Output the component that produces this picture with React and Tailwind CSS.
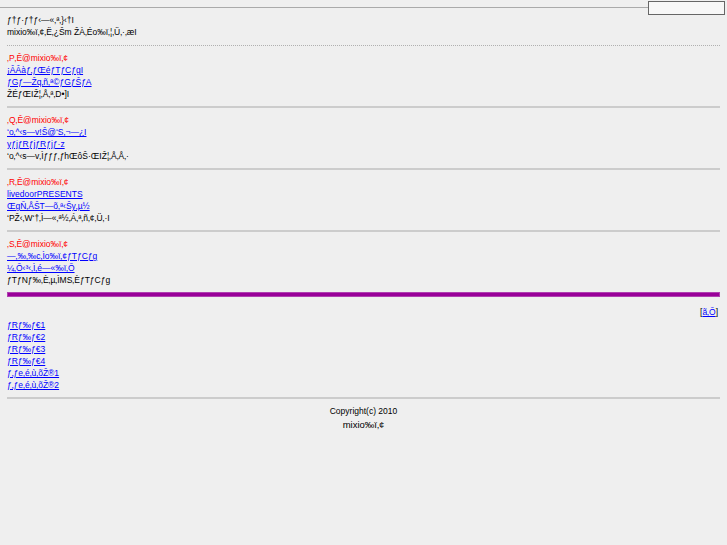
const SECTIONS = [
  {
    title: '‚P‚Ê@mixio‰ï‚¢',
    links: ['¡ÂÂàƒ‚ƒŒéƒTƒCƒgI', 'ƒGƒ—Žq‚ñ‚ª©ƒGƒŠƒA'],
    note: 'ŽÉƒŒIŽ¦‚Å‚ª‚D•]I',
  },
  {
    title: '‚Q‚Ê@mixio‰ï‚¢',
    links: ['‘o‚^‹s—v!Š@‘S‚¬—¿I', 'yƒjƒRƒjƒRƒjƒ·z'],
    note: '‘o‚^‹s—v‚Ìƒƒƒ‚ƒhŒôŠ·ŒIŽ¦‚Å‚Å‚·',
  },
  {
    title: '‚R‚Ê@mixio‰ï‚¢',
    links: ['livedoorPRESENTS', 'ŒgÑ‚ÅŠT—õ‚ª‹Šy‚µ½'],
    note: '‘PŽ‹‚W‘†‚Ì—«‚ª½‚Á‚ª‚ñ‚¢‚Ü‚·I',
  },
  {
    title: '‚S‚Ê@mixio‰ï‚¢',
    links: ['—‚‰‚‰c‚Ìo‰ï‚¢ƒTƒCƒg', '¼‚Õ‹³‹‚Ì‚é—«‰ï‚Õ'],
    note: 'ƒTƒNƒ‰‚È‚µ‚ÌMS‚ÈƒTƒCƒg',
  },
]

const MENU = ['ƒRƒ‰ƒ€1', 'ƒRƒ‰ƒ€2', 'ƒRƒ‰ƒ€3', 'ƒRƒ‰ƒ€4', 'ƒ‚ƒe‚é‚ù‚õŽ®1', 'ƒ‚ƒe‚é‚ù‚õŽ®2']

function Section({ s, last }) {
  return (
    <div className="mt-[6px]">
      <p className="text-[#ff0000]">{s.title}</p>
      {s.links.map((l) => (
        <p key={l}>
          <a href="#" className="text-[#0000ff] underline">{l}</a>
        </p>
      ))}
      <p>{s.note}</p>
      {!last && <div className="mt-[6px] h-[2px] bg-[#cccccc]" />}
    </div>
  )
}

export default function App() {
  return (
    <div className="min-h-[545px] bg-[#efefef] text-[#000] text-[8.5px] leading-[12px] font-['Liberation_Sans',Arial,sans-serif]">
      {/* header strip */}
      <div className="flex items-start">
        <div className="flex-1 mt-[7px] h-px bg-[#aaaaaa]" />
        <div className="mt-[1px] mr-[2px] w-[77px] h-[14px] border border-[#666666] bg-[#f7f7f7]" />
      </div>

      <div className="px-[7px]">
        <div className="-mt-px">
          <p>ƒ†ƒ·ƒ†ƒ‹—«‚ª‚}‹†I</p>
          <p>mixio‰ï‚¢‚Ë‚¿Šm ŽÀ‚Éo‰ï‚¦‚Ü‚·‚æI</p>
        </div>
        <div className="mt-[7px] border-t border-dotted border-[#b0b0b0]" />

        {SECTIONS.map((s, i) => (
          <div key={s.title} className={i > 0 ? 'mt-px' : ''}>
            <Section s={s} last={i === SECTIONS.length - 1} />
          </div>
        ))}

        <div className="mt-[6px] h-[5px] bg-[#990099] border border-[#b040b0]" />

        <div className="mt-[9px] flex justify-end pr-[2px]">
          <span>
            [<a href="#" className="text-[#0000ff] underline">ã‚Õ</a>]
          </span>
        </div>

        <div className="mt-px">
          {MENU.map((m) => (
            <p key={m}>
              <a href="#" className="text-[#0000ff] underline">{m}</a>
            </p>
          ))}
        </div>

        <div className="mt-[6px] h-[2px] bg-[#cccccc]" />

        <div className="mt-[6px] text-center leading-[13px]">
          <p>Copyright(c) 2010</p>
          <p className="text-[9.5px]">mixio‰ï‚¢</p>
        </div>
      </div>
    </div>
  )
}
